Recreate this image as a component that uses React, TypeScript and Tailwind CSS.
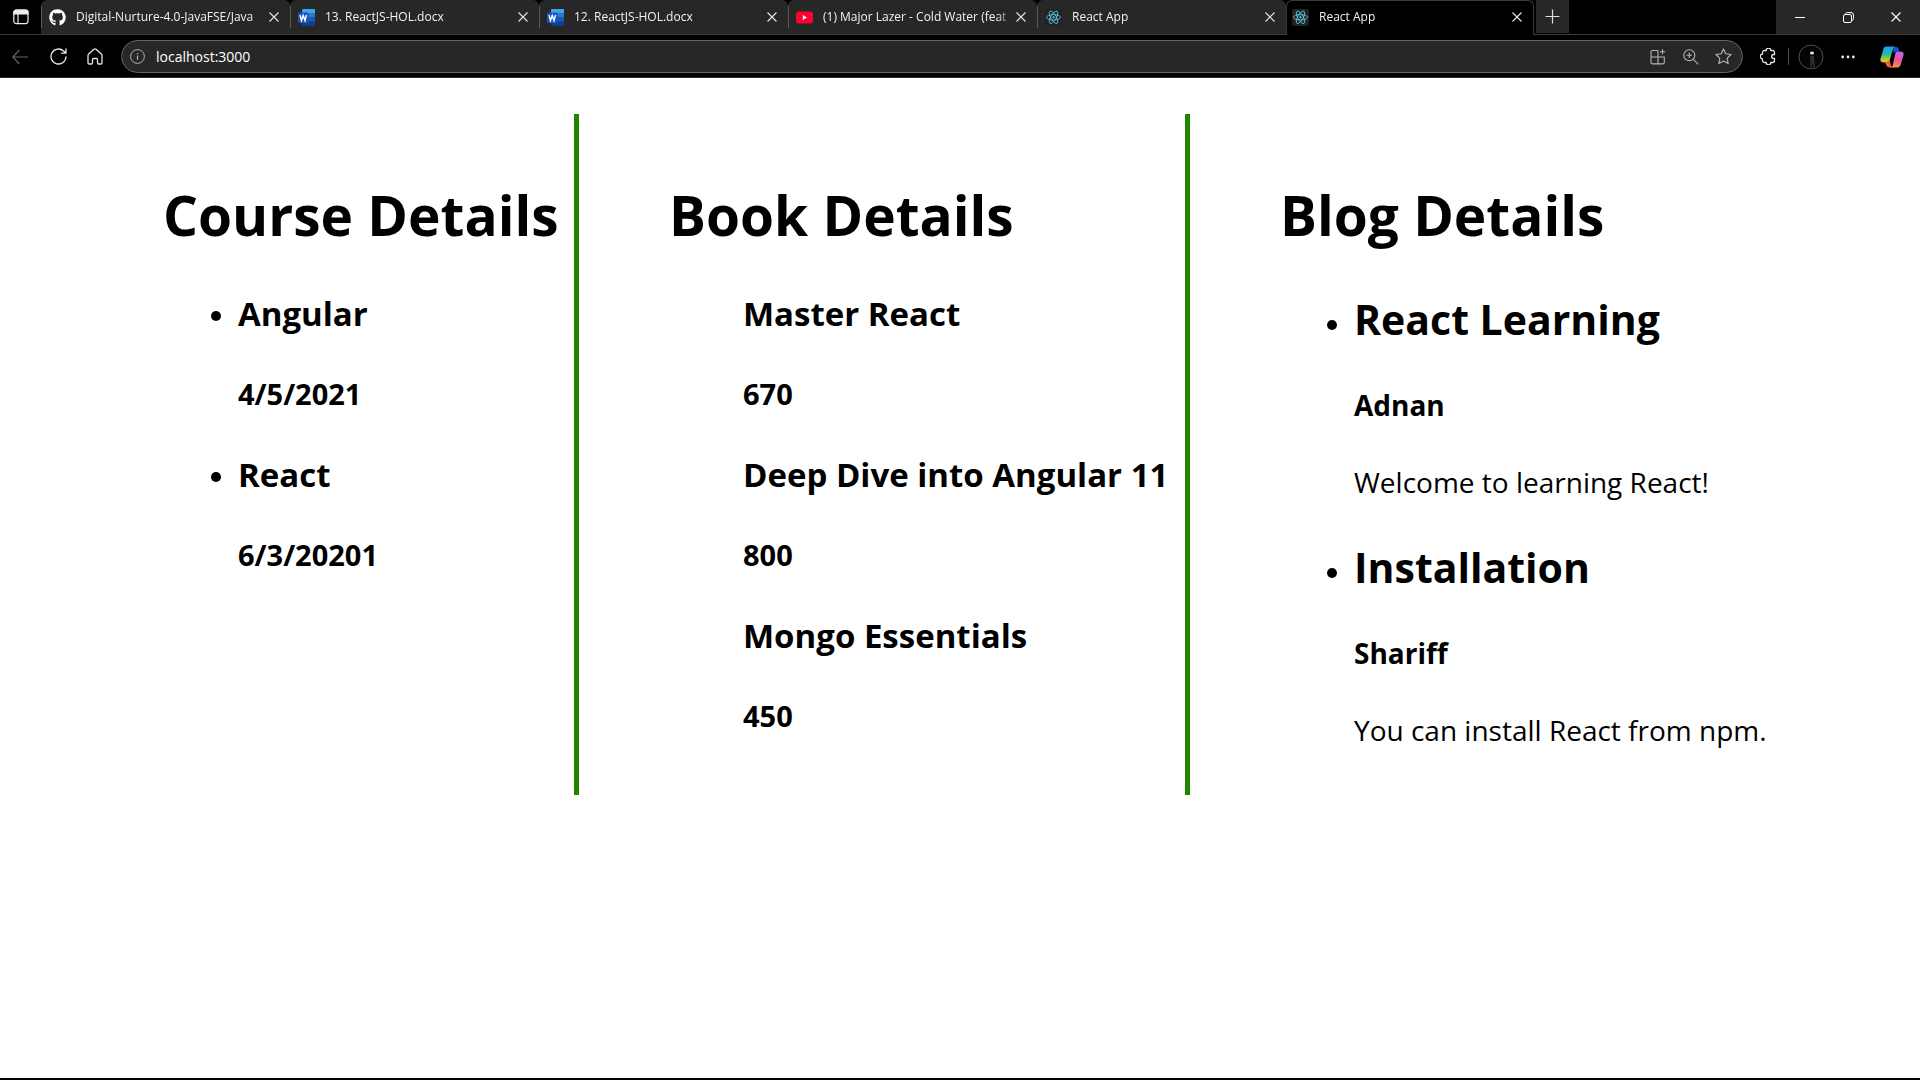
import type { ReactNode } from "react";
import { FaGithub } from "react-icons/fa";

const CloseIcon = ({ className = "" }: { className?: string }) => (
  <svg viewBox="0 0 10 10" className={`size-[10px] ${className}`} fill="none" stroke="currentColor" strokeWidth="1.1">
    <path d="M.5.5l9 9M9.5.5l-9 9" />
  </svg>
);

const WordIcon = () => (
  <svg viewBox="0 0 17 17" className="size-[17px]">
    <path d="M5 0h11a1 1 0 0 1 1 1v3.5H4V1a1 1 0 0 1 1-1z" fill="#41a5ee" />
    <path d="M4 4.3h13v4.2H4z" fill="#2b7cd3" />
    <path d="M4 8.5h13v4.2H4z" fill="#185abd" />
    <path d="M4 12.7h13V16a1 1 0 0 1-1 1H5a1 1 0 0 1-1-1z" fill="#103f91" />
    <rect x="0" y="3.5" width="10.5" height="10.5" rx="1" fill="#1b53bd" />
    <path d="M2 6l1.5 5.6L5.2 6.4l1.8 5.2L8.5 6" fill="none" stroke="#fff" strokeWidth="1.4" />
  </svg>
);

const YoutubeIcon = () => (
  <svg viewBox="0 0 17 17" className="size-[17px]">
    <rect x="0" y="2.5" width="17" height="12" rx="3" fill="#ff0033" />
    <path d="M6.8 6v5l4.2-2.5z" fill="#fff" />
  </svg>
);

const ReactIcon = () => (
  <svg viewBox="0 0 17 17" className="size-[17px]" fill="none" stroke="#61dafb" strokeWidth=".75">
    <rect width="17" height="17" rx="2" fill="#222" stroke="none" />
    <circle cx="8.5" cy="8.3" r="1.1" fill="#61dafb" stroke="none" />
    <ellipse cx="8.5" cy="8.3" rx="7" ry="2.7" />
    <ellipse cx="8.5" cy="8.3" rx="7" ry="2.7" transform="rotate(60 8.5 8.3)" />
    <ellipse cx="8.5" cy="8.3" rx="7" ry="2.7" transform="rotate(120 8.5 8.3)" />
  </svg>
);

const CopilotIcon = () => (
  <svg viewBox="0 0 24 22" className="h-[22px] w-6">
    <defs>
      <linearGradient id="cpA" x1="0" y1="0" x2="0" y2="1">
        <stop offset="0" stopColor="#1fa2f5" />
        <stop offset=".45" stopColor="#22b5b0" />
        <stop offset=".75" stopColor="#9fc93c" />
        <stop offset="1" stopColor="#f5c518" />
      </linearGradient>
      <linearGradient id="cpB" x1=".6" y1="0" x2=".2" y2="1">
        <stop offset="0" stopColor="#b06bf0" />
        <stop offset=".45" stopColor="#f0509c" />
        <stop offset="1" stopColor="#ff9a3c" />
      </linearGradient>
    </defs>
    <path d="M13 1h3.2c1.3 0 2 .9 2.400 2.100L19.300 5.500h-2.500c-1.500 0-2.600.9-3 2.400z" fill="#1a4fd6" />
    <path d="M6.600.6h8.800c-1.300.2-2 1-2.400 2.300L9.700 14c-.5 1.600-1.600 2.500-3.200 2.500H3.300C1 16.500-.1 14.900.5 12.700L3.400 3C3.900 1.400 5 .6 6.600.6z" fill="url(#cpA)" />
    <path d="M4.700 16.500h1.800c1.600 0 2.700-.9 3.200-2.500l1.100 5.200c.3 1.200.9 2 2 2.200H9.200c-1.600 0-2.400-.9-2.900-2.500z" fill="#f4632d" />
    <path d="M17.400 5.500h3.300c2.300 0 3.400 1.600 2.800 3.800l-2.900 9.700c-.5 1.600-1.600 2.400-3.200 2.400H10.500c1.300-.2 2-1 2.400-2.300L15.200 8c.4-1.600.9-2.500 2.200-2.500z" fill="url(#cpB)" />
  </svg>
);

type TabInfo = { title: string; icon: ReactNode };

const tabs: TabInfo[] = [
  { title: "Digital-Nurture-4.0-JavaFSE/Java", icon: <FaGithub className="size-[17px] text-white" /> },
  { title: "13. ReactJS-HOL.docx", icon: <WordIcon /> },
  { title: "12. ReactJS-HOL.docx", icon: <WordIcon /> },
  { title: "(1) Major Lazer - Cold Water (feat", icon: <YoutubeIcon /> },
  { title: "React App", icon: <ReactIcon /> },
];

function Tab({ tab, active = false }: { tab: TabInfo; active?: boolean }) {
  return (
    <div
      className={
        active
          ? "-mb-px flex h-[35px] min-w-0 flex-[0_1_248px] items-center rounded-t-md border-x border-t border-[#3b3b3b] bg-black pr-2 pb-0.5 pl-[5px]"
          : "flex h-[34px] min-w-0 flex-[0_1_249px] items-center rounded-t-md bg-[#272727] pr-2"
      }
    >
      {!active && <span className="mr-[7px] h-[22px] w-px shrink-0 bg-[#5a5a5a]" />}
      <span className="shrink-0">{tab.icon}</span>
      <span className="ml-2.5 min-w-0 flex-1 overflow-hidden text-xs whitespace-nowrap text-[#f2f2f2] [mask-image:linear-gradient(to_right,#000_calc(100%-16px),transparent)]">
        {tab.title}
      </span>
      <button aria-label="Close tab" className="shrink-0 p-[3px] text-[#e8e8e8]">
        <CloseIcon />
      </button>
    </div>
  );
}

function TabStrip() {
  return (
    <div className="flex h-[35px] border-b border-[#3b3b3b] bg-black">
      <button aria-label="Tab actions" className="flex w-[41px] shrink-0 items-center justify-center text-[#eee]">
        <svg viewBox="0 0 16 16" className="size-4" fill="none" stroke="currentColor" strokeWidth="1.2">
          <rect x=".8" y="1.200" width="14.200" height="13.400" rx="2.500" />
          <path d="M.8 5V3.700a2.500 2.500 0 0 1 2.500-2.500h9.200a2.500 2.500 0 0 1 2.500 2.500V5z" fill="currentColor" />
          <path d="M5 5v9.600" />
        </svg>
      </button>
      {tabs.map((t, i) => (
        <Tab key={i} tab={t} />
      ))}
      <Tab tab={{ title: "React App", icon: <ReactIcon /> }} active />
      <button aria-label="New tab" className="ml-0.5 flex h-[33px] w-[33px] shrink-0 items-center justify-center bg-[#272727] text-[#ddd]">
        <svg viewBox="0 0 15 15" className="size-[15px]" fill="none" stroke="currentColor" strokeWidth="1.200">
          <path d="M7.500.5v14M.5 7.500h14" />
        </svg>
      </button>
      <div className="flex-1" />
      <div className="grid w-36 shrink-0 grid-cols-3 bg-[#272727] text-white">
        <button aria-label="Minimize" className="flex items-center justify-center">
          <svg viewBox="0 0 10 10" className="size-[10px]" stroke="currentColor">
            <path d="M0 5.500h10" />
          </svg>
        </button>
        <button aria-label="Restore" className="flex items-center justify-center">
          <svg viewBox="0 0 11 11" className="size-[11px]" fill="none" stroke="currentColor">
            <rect x=".5" y="2.500" width="8" height="8" rx="1.500" />
            <path d="M2.500 2.300C2.600 1.200 3.200.5 4.300.5H8a2.500 2.500 0 0 1 2.500 2.500v3.500c0 1.200-.7 1.900-1.800 2" />
          </svg>
        </button>
        <button aria-label="Close window" className="flex items-center justify-center">
          <CloseIcon />
        </button>
      </div>
    </div>
  );
}

function Toolbar() {
  return (
    <div className="flex h-[43px] items-center border-b border-[#2c2c2c] bg-black pt-px pr-4 pl-3 text-[#e6e6e6]">
      <button aria-label="Back" className="text-[#666]">
        <svg viewBox="0 0 16 16" className="size-4" fill="none" stroke="currentColor" strokeWidth="1.100">
          <path d="M7.500 1L.8 8l6.700 7M.8 8H16" />
        </svg>
      </button>
      <button aria-label="Refresh" className="ml-[22px]">
        <svg viewBox="0 0 17 17" className="size-[17px]" fill="none" stroke="currentColor" strokeWidth="1.300">
          <path d="M16 8.500A7.500 7.500 0 1 1 13.600 3L15.800 5M16 .5V5.200h-4.800" />
        </svg>
      </button>
      <button aria-label="Home" className="ml-5">
        <svg viewBox="0 0 16 17" className="h-[17px] w-4" fill="none" stroke="currentColor" strokeWidth="1.300" strokeLinejoin="round">
          <path d="M1 7.500c0-.6.200-1 .6-1.400L7 1.300c.6-.5 1.400-.5 2 0l5.400 4.800c.4.400.6.800.6 1.400V14.800c0 .7-.5 1.200-1.200 1.200h-2.100c-.7 0-1.200-.5-1.200-1.200v-3.300c0-.6-.4-1-1-1H6.500c-.6 0-1 .4-1 1v3.300c0 .7-.5 1.200-1.200 1.200H2.200C1.500 16 1 15.500 1 14.800z" />
        </svg>
      </button>
      <div className="ml-[18px] flex h-[33px] min-w-0 flex-1 items-center rounded-full border border-[#666] bg-[#272727] pr-2.5 pl-2 text-[#b5b5b5]">
        <button aria-label="Site information">
          <svg viewBox="0 0 15 15" className="size-[15px]" fill="none" stroke="currentColor">
            <circle cx="7.500" cy="7.500" r="6.900" />
            <path d="M7.500 6.600v4.200M7.500 4v1.300" strokeWidth="1.200" />
          </svg>
        </button>
        <input
          aria-label="Address"
          defaultValue="localhost:3000"
          className="ml-[11px] min-w-0 flex-1 bg-transparent text-sm text-white outline-none"
        />
        <button aria-label="Install app">
          <svg viewBox="0 0 16 16" className="size-4" fill="none" stroke="currentColor" strokeWidth="1.100">
            <path d="M8 1.500H2.500a1.500 1.500 0 0 0-1.500 1.500v10A1.500 1.500 0 0 0 2.500 14.900h10.300a1.500 1.500 0 0 0 1.500-1.500V8H1M8 1.500v13.400M12.500.3v5M10 2.800h5.200" />
          </svg>
        </button>
        <button aria-label="Zoom" className="ml-[17px]">
          <svg viewBox="0 0 16 16" className="size-4" fill="none" stroke="currentColor" strokeWidth="1.100">
            <circle cx="6.300" cy="6.300" r="5.500" />
            <path d="M10.300 10.300l5 5M6.300 3.600v5.400M3.600 6.300H9" />
          </svg>
        </button>
        <button aria-label="Add to favorites" className="ml-4">
          <svg viewBox="0 0 17 17" className="size-[17px]" fill="none" stroke="currentColor" strokeWidth="1.100" strokeLinejoin="round">
            <path d="M8.500.9l2.300 4.900 5.300.7-3.900 3.700 1 5.400-4.700-2.600-4.700 2.600 1-5.400L.9 6.500l5.300-.7z" />
          </svg>
        </button>
      </div>
      <button aria-label="Extensions" className="ml-[17px]">
        <svg viewBox="0 0 17 17" className="size-[17px]" fill="none" stroke="currentColor" strokeWidth="1.300" strokeLinejoin="round">
          <path d="M4.500 2.500h1.700a2.300 2.300 0 0 1 4.600 0h1.700A2 2 0 0 1 14.500 4.500v2h-.8a2 2 0 0 0 0 4h.8v2a2 2 0 0 1-2 2h-1.700a2.300 2.300 0 0 1-4.600 0H4.500a2 2 0 0 1-2-2v-1.700a2.300 2.300 0 0 1 0-4.600V4.500a2 2 0 0 1 2-2z" />
        </svg>
      </button>
      <span className="ml-[11px] h-[17px] w-px bg-[#4a4a4a]" />
      <button aria-label="Profile" className="ml-[9px]">
        <svg viewBox="0 0 26 26" className="size-[26px]" fill="none">
          <circle cx="13" cy="13" r="12" fill="#050505" stroke="#4f4f4f" />
          <ellipse cx="14" cy="9" rx="2" ry="1.500" fill="#e8e8e8" />
          <path d="M11.800 12h4l.7 5 .2 7.500h-1.200l-1-7-1 7.500h-1.300l.2-7.500z" fill="#2e2e2e" />
        </svg>
      </button>
      <button aria-label="Settings and more" className="ml-[17px]">
        <svg viewBox="0 0 14 4" className="h-1 w-[14px]" fill="currentColor">
          <circle cx="1.700" cy="2" r="1.400" />
          <circle cx="7" cy="2" r="1.400" />
          <circle cx="12.300" cy="2" r="1.400" />
        </svg>
      </button>
      <button aria-label="Copilot" className="ml-[25px]">
        <CopilotIcon />
      </button>
    </div>
  );
}

const courses = [
  { name: "Angular", date: "4/5/2021" },
  { name: "React", date: "6/3/20201" },
];

const books = [
  { name: "Master React", price: 670 },
  { name: "Deep Dive into Angular 11", price: 800 },
  { name: "Mongo Essentials", price: 450 },
];

const blogs = [
  { title: "React Learning", author: "Adnan", text: "Welcome to learning React!" },
  { title: "Installation", author: "Shariff", text: "You can install React from npm." },
];

const Heading = ({ children }: { children: ReactNode }) => (
  <h1 className="text-[55px] leading-[76px] font-bold whitespace-nowrap">{children}</h1>
);

export default function App() {
  return (
    <div className="flex min-h-screen flex-col border-b-2 border-black bg-white font-['Open_Sans','Noto_Sans',sans-serif] text-black">
      <header>
        <TabStrip />
        <Toolbar />
      </header>
      <main className="flex flex-1 items-start justify-center pt-9">
        <div className="flex min-h-[681px]">
          <section className="w-[417px] border-r-[5px] border-[#228500] pt-[63px] pl-px">
            <Heading>Course Details</Heading>
            <ul className="mt-[38px] ml-[75px] list-disc text-[29px]">
              {courses.map((c) => (
                <li key={c.name} className="mb-[38px]">
                  <h3 className="text-[33px] leading-[45px] font-bold">{c.name}</h3>
                  <h4 className="mt-[38px] text-[29px] leading-10 font-bold">{c.date}</h4>
                </li>
              ))}
            </ul>
          </section>
          <section className="w-[611px] border-r-[5px] border-[#228500] pt-[63px] pl-[90px]">
            <Heading>Book Details</Heading>
            <ul className="mt-[38px] ml-[74px]">
              {books.map((b) => (
                <li key={b.name} className="mb-[38px]">
                  <h3 className="text-[33px] leading-[45px] font-bold whitespace-nowrap">{b.name}</h3>
                  <h4 className="mt-[38px] text-[29px] leading-10 font-bold">{b.price}</h4>
                </li>
              ))}
            </ul>
          </section>
          <section className="w-[568px] pt-[63px] pl-[90px]">
            <Heading>Blog Details</Heading>
            <ul className="mt-[38px] ml-[74px] list-disc text-[29px]">
              {blogs.map((b) => (
                <li key={b.title} className="mb-[37px]">
                  <h2 className="text-[41px] leading-[57px] font-bold whitespace-nowrap">{b.title}</h2>
                  <h4 className="mt-[37px] text-[28px] leading-10 font-bold">{b.author}</h4>
                  <p className="mt-[37px] text-[28px] leading-10 whitespace-nowrap">{b.text}</p>
                </li>
              ))}
            </ul>
          </section>
        </div>
      </main>
    </div>
  );
}
